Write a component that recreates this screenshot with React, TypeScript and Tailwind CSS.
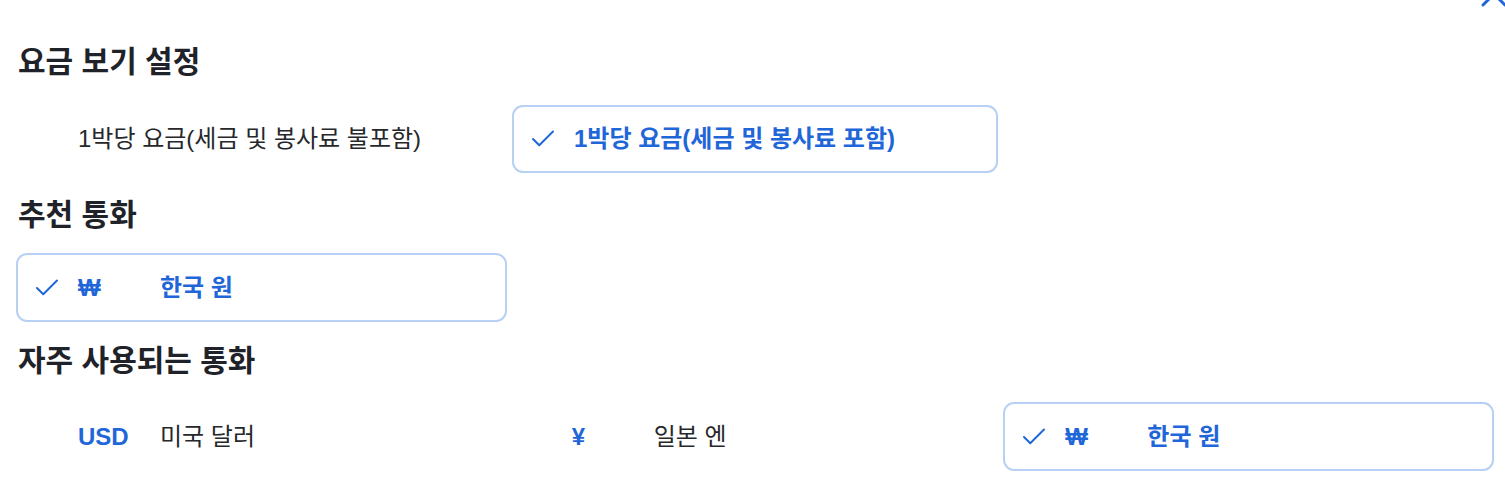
import { Check, X } from "lucide-react";

type Option = {
    symbol?: string,
    label: string,
    selected?: boolean,
    tall?: boolean
};

const Choice = ({symbol, label, selected, tall}: Option) => {
    const box = selected
        ? "border-[#b7d0f4] text-[#1f66d8] font-bold"
        : "border-transparent text-[#26282b]";
    return (
        <div className={`flex items-center ${tall ? "h-[69px]" : "h-[68px]"} rounded-[11px] border-2 ${box}`}>
            <div className="w-[60px] pl-[14px] shrink-0">
                {selected && <Check size={30} strokeWidth={1.6} className="text-[#1f66d8]" />}
            </div>
            {symbol !== undefined && (
                <span className="w-[82px] shrink-0 font-bold text-[#1f66d8]">{symbol}</span>
            )}
            <span>{label}</span>
        </div>
    );
};

const Heading = ({children, className}: {children: string, className: string}) => (
    <h2 className={`pl-[18px] text-[30px] leading-[36px] font-bold text-[#1f2329] ${className}`}>{children}</h2>
);

export default function App() {
    return (
        <div className="relative w-[1505px] h-[493px] overflow-hidden bg-white text-[24px] font-['Liberation_Sans','Noto_Sans_CJK_KR',sans-serif]">
            <X size={44} strokeWidth={1.6} className="absolute right-[-11px] top-[-28px] text-[#1f66d8]" />

            <Heading className="mt-[44px]">요금 보기 설정</Heading>
            <div className="grid grid-cols-[491px_486px] gap-[5px] pl-[16px] mt-[25px]">
                <Choice label="1박당 요금(세금 및 봉사료 불포함)" />
                <Choice label="1박당 요금(세금 및 봉사료 포함)" selected />
            </div>

            <Heading className="mt-[24px]">추천 통화</Heading>
            <div className="grid grid-cols-3 gap-[3px] pl-[16px] pr-[11px] mt-[20px]">
                <Choice symbol="₩" label="한국 원" selected tall />
            </div>

            <Heading className="mt-[21px]">자주 사용되는 통화</Heading>
            <div className="grid grid-cols-3 gap-[3px] pl-[16px] pr-[11px] mt-[23px]">
                <Choice symbol="USD" label="미국 달러" tall />
                <Choice symbol="¥" label="일본 엔" tall />
                <Choice symbol="₩" label="한국 원" selected tall />
            </div>
        </div>
    );
}
